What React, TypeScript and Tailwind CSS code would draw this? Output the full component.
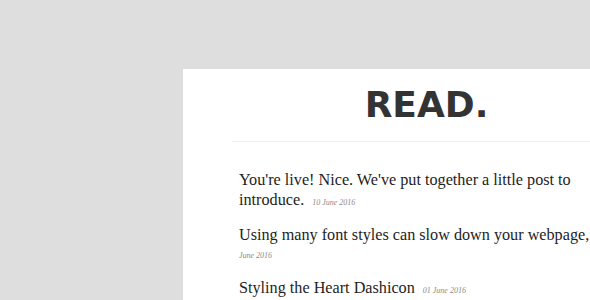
import React from "react";

const serif = { fontFamily: '"Liberation Serif", "Times New Roman", serif' };

function DateTag({ children }: { children: React.ReactNode }) {
  return (
    <span className="ml-[8px] text-[8px] italic text-[#8a8a8a]" style={serif}>
      {children}
    </span>
  );
}

export default function App() {
  return (
    <div className="w-[590px] h-[300px] overflow-hidden bg-[#dedede] pt-[69px] pl-[183px]">
      <div className="w-[487px] h-full bg-white px-[49px]">
        <h1
          className="pt-[18px] pb-[18px] text-center text-[36px] leading-[36px] font-bold text-[#333333]"
          style={{ fontFamily: '"DejaVu Sans", sans-serif' }}
        >
          READ.
        </h1>
        <div className="h-px bg-[#efefef]" />
        <div className="pl-[7px] pt-[28px] text-[16.2px] leading-[20px] text-[#1e1e1e]" style={serif}>
          <div className="mb-[12px]">
            <div className="whitespace-nowrap">You're live! Nice. We've put together a little post to</div>
            <div className="whitespace-nowrap">
              introduce.
              <DateTag>10 June 2016</DateTag>
            </div>
          </div>
          <div className="mb-[14px]">
            <div className="whitespace-nowrap">
              Using many font styles can slow down your webpage,
              <DateTag>01</DateTag>
            </div>
            <div className="text-[8px] leading-[16px] italic text-[#8a8a8a]">June 2016</div>
          </div>
          <div className="whitespace-nowrap">
            Styling the Heart Dashicon
            <DateTag>01 June 2016</DateTag>
          </div>
        </div>
      </div>
    </div>
  );
}
